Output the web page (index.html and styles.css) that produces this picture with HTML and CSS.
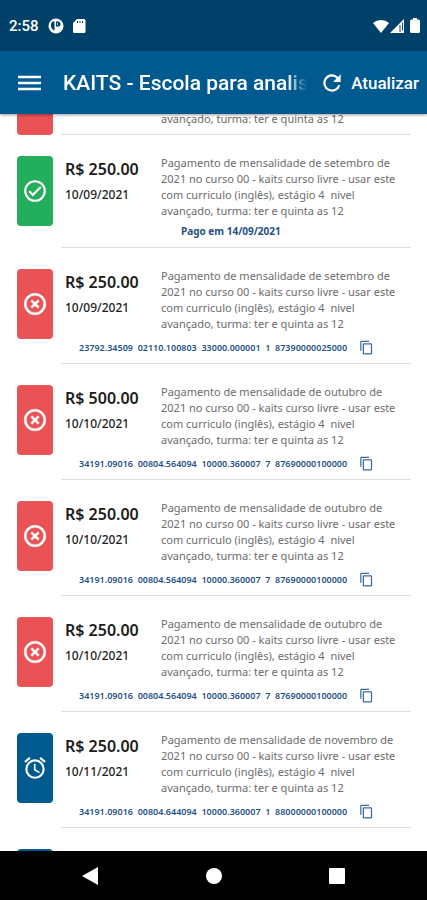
FILE: index.html
```html
<!DOCTYPE html>
<html lang="pt-BR">
<head>
<meta charset="utf-8">
<meta name="viewport" content="width=device-width, initial-scale=1">
<title>KAITS</title>
<link rel="stylesheet" href="styles.css">
</head>
<body>
<svg class="defs" aria-hidden="true">
  <symbol id="check" viewBox="0 0 24 24"><path d="M12 2a10 10 0 1 0 0 20 10 10 0 0 0 0-20zm0 18a8 8 0 1 1 0-16 8 8 0 0 1 0 16zm4.590-12.420L10 14.170l-2.590-2.580L6 13l4 4 8-8z"/></symbol>
  <symbol id="cross" viewBox="0 0 24 24"><path d="M14.590 8L12 10.590 9.410 8 8 9.410 10.590 12 8 14.590 9.410 16 12 13.410 14.590 16 16 14.590 13.410 12 16 9.410 14.590 8zM12 2a10 10 0 1 0 0 20 10 10 0 0 0 0-20zm0 18a8 8 0 1 1 0-16 8 8 0 0 1 0 16z" stroke="#fff" stroke-width=".4"/></symbol>
  <symbol id="alarm" viewBox="0 0 24 24"><path d="M22 5.720l-4.600-3.860-1.290 1.530 4.600 3.860L22 5.720zM7.880 3.390L6.600 1.860 2 5.710l1.290 1.530 4.590-3.850zM12.500 8H11v6l4.750 2.850.75-1.230-4-2.370V8zM12 4a9 9 0 1 0 0 18 9 9 0 0 0 0-18zm0 16a7 7 0 1 1 0-14 7 7 0 0 1 0 14z"/></symbol>
  <symbol id="copy" viewBox="0 0 24 24"><path d="M16 1H4c-1.100 0-2 .9-2 2v14h2V3h12V1zm3 4H8c-1.100 0-2 .9-2 2v14c0 1.100.9 2 2 2h11c1.100 0 2-.9 2-2V7c0-1.100-.9-2-2-2zm0 16H8V7h11v14z"/></symbol>
</svg>

<div class="status">
  <span class="clock">2:58</span>
  <svg class="status-icon" viewBox="0 0 16 16"><circle cx="8" cy="8" r="7.500" fill="#fff"/><path d="M4.500 3.500h2v9A5.500 5.500 0 0 1 4.500 3.500zM8 3.500h2a2.500 2.500 0 0 1 0 5H8z" fill="#004169"/><path d="M9 5.200h1v1.500H9z" fill="#fff"/></svg>
  <svg class="status-icon sd" viewBox="0 0 16 16"><path d="M6 1h7a1.500 1.500 0 0 1 1.500 1.500v11A1.500 1.500 0 0 1 13 15H3.500A1.500 1.500 0 0 1 2 13.500V5z" fill="#fff"/><path d="M6.500 3v2M9 3v2M11.500 3v2" stroke="#004169"/></svg>
  <span class="spacer"></span>
  <svg class="wifi" viewBox="0 0 16 14"><path d="M8 14L0 4a12 12 0 0 1 16 0z" fill="#fff"/></svg>
  <svg class="signal" viewBox="0 0 14 14"><path d="M14 0v14H0z" fill="#fff"/><path d="M10 6v7M12.500 3.500v8" stroke="#004169" stroke-width="1"/></svg>
  <svg class="battery" viewBox="0 0 10 15"><path d="M3 0h4v1.500h1.500A1.500 1.500 0 0 1 10 3v10.500A1.500 1.500 0 0 1 8.500 15h-7A1.500 1.500 0 0 1 0 13.500V3a1.500 1.500 0 0 1 1.500-1.500H3z" fill="#fff"/></svg>
</div>

<header class="appbar">
  <button class="menu" aria-label="Menu"><svg viewBox="0 0 24 16"><path d="M0 2h23M0 8h23M0 14h23" stroke="#fff" stroke-width="2.500"/></svg></button>
  <h1>KAITS - Escola para analis</h1>
  <button class="refresh"><svg viewBox="0 0 24 24"><path d="M17.650 6.350A8 8 0 1 0 19.730 14h-2.080A6 6 0 1 1 12 6c1.660 0 3.140.69 4.220 1.780L13 11h7V4l-2.350 2.350z" fill="#fff"/></svg>Atualizar</button>
</header>

<main>
  <ul class="list">
    <li class="item">
      <span class="badge overdue"></span>
      <div class="content">
        <p>avançado, turma: ter e quinta as 12</p>
      </div>
    </li>
    <li class="item">
      <span class="badge paid"><svg><use href="#check"/></svg></span>
      <div class="content">
        <div class="sum"><strong>R$ 250.00</strong><time>10/09/2021</time></div>
        <p>Pagamento de mensalidade de setembro de<br>2021 no curso 00 - kaits curso livre - usar este<br>com curriculo (inglês), estágio 4&nbsp; nivel<br>avançado, turma: ter e quinta as 12</p>
        <div class="paid-on">Pago em 14/09/2021</div>
      </div>
    </li>
    <li class="item">
      <span class="badge overdue"><svg><use href="#cross"/></svg></span>
      <div class="content">
        <div class="sum"><strong>R$ 250.00</strong><time>10/09/2021</time></div>
        <p>Pagamento de mensalidade de setembro de<br>2021 no curso 00 - kaits curso livre - usar este<br>com curriculo (inglês), estágio 4&nbsp; nivel<br>avançado, turma: ter e quinta as 12</p>
        <div class="code"><span>23792.34509&nbsp; 02110.100803&nbsp; 33000.000001&nbsp; 1&nbsp; 87390000025000</span><button aria-label="Copiar"><svg><use href="#copy"/></svg></button></div>
      </div>
    </li>
    <li class="item">
      <span class="badge overdue"><svg><use href="#cross"/></svg></span>
      <div class="content">
        <div class="sum"><strong>R$ 500.00</strong><time>10/10/2021</time></div>
        <p>Pagamento de mensalidade de outubro de<br>2021 no curso 00 - kaits curso livre - usar este<br>com curriculo (inglês), estágio 4&nbsp; nivel<br>avançado, turma: ter e quinta as 12</p>
        <div class="code"><span>34191.09016&nbsp; 00804.564094&nbsp; 10000.360007&nbsp; 7&nbsp; 87690000100000</span><button aria-label="Copiar"><svg><use href="#copy"/></svg></button></div>
      </div>
    </li>
    <li class="item">
      <span class="badge overdue"><svg><use href="#cross"/></svg></span>
      <div class="content">
        <div class="sum"><strong>R$ 250.00</strong><time>10/10/2021</time></div>
        <p>Pagamento de mensalidade de outubro de<br>2021 no curso 00 - kaits curso livre - usar este<br>com curriculo (inglês), estágio 4&nbsp; nivel<br>avançado, turma: ter e quinta as 12</p>
        <div class="code"><span>34191.09016&nbsp; 00804.564094&nbsp; 10000.360007&nbsp; 7&nbsp; 87690000100000</span><button aria-label="Copiar"><svg><use href="#copy"/></svg></button></div>
      </div>
    </li>
    <li class="item">
      <span class="badge overdue"><svg><use href="#cross"/></svg></span>
      <div class="content">
        <div class="sum"><strong>R$ 250.00</strong><time>10/10/2021</time></div>
        <p>Pagamento de mensalidade de outubro de<br>2021 no curso 00 - kaits curso livre - usar este<br>com curriculo (inglês), estágio 4&nbsp; nivel<br>avançado, turma: ter e quinta as 12</p>
        <div class="code"><span>34191.09016&nbsp; 00804.564094&nbsp; 10000.360007&nbsp; 7&nbsp; 87690000100000</span><button aria-label="Copiar"><svg><use href="#copy"/></svg></button></div>
      </div>
    </li>
    <li class="item">
      <span class="badge upcoming"><svg><use href="#alarm"/></svg></span>
      <div class="content">
        <div class="sum"><strong>R$ 250.00</strong><time>10/11/2021</time></div>
        <p>Pagamento de mensalidade de novembro de<br>2021 no curso 00 - kaits curso livre - usar este<br>com curriculo (inglês), estágio 4&nbsp; nivel<br>avançado, turma: ter e quinta as 12</p>
        <div class="code"><span>34191.09016&nbsp; 00804.644094&nbsp; 10000.360007&nbsp; 1&nbsp; 88000000100000</span><button aria-label="Copiar"><svg><use href="#copy"/></svg></button></div>
      </div>
    </li>
    <li class="item">
      <span class="badge upcoming"></span>
    </li>
  </ul>
</main>

<nav class="navbar">
  <button aria-label="Voltar"><svg viewBox="0 0 18 18"><path d="M16 0v18L0 9z" fill="#fff"/></svg></button>
  <button aria-label="Início"><svg viewBox="0 0 18 18"><circle cx="9" cy="9" r="8" fill="#fff"/></svg></button>
  <button aria-label="Recentes"><svg viewBox="0 0 18 18"><rect x="1" y="1" width="16" height="16" rx="1" fill="#fff"/></svg></button>
</nav>
</body>
</html>
```
FILE: styles.css
```css
* { box-sizing: border-box; }
body {
  margin: 0;
  height: 100vh;
  display: flex;
  flex-direction: column;
  overflow: hidden;
  background: #fff;
  font-family: "Noto Sans", sans-serif;
}
button {
  display: flex;
  align-items: center;
  padding: 0;
  border: 0;
  background: none;
  color: inherit;
  font: inherit;
}
.defs { display: none; }
.status, .appbar {
  display: flex;
  align-items: center;
  flex: none;
  color: #fff;
  font-family: Roboto, sans-serif;
  font-weight: 500;
}
.status {
  height: 51px;
  padding: 0 7px 0 9px;
  background: #004169;
  font-size: 15px;
}
.status-icon { width: 16px; height: 16px; margin-left: 9px; }
.sd { margin-left: 7px; }
.spacer { flex: 1; }
.wifi { width: 16px; height: 14px; }
.signal { width: 14px; height: 14px; margin: 0 6px 0 1px; }
.battery { width: 10px; height: 15px; }
.appbar {
  position: relative;
  height: 63px;
  padding: 0 8px 0 18px;
  background: #005a8f;
  box-shadow: 0 1px 3px rgba(0, 0, 0, 0.4);
}
.menu { margin-right: 21px; }
.menu svg { width: 24px; height: 16px; }
h1 {
  flex: 1;
  min-width: 0;
  margin: 0;
  overflow: hidden;
  white-space: nowrap;
  font-size: 21px;
  font-weight: 500;
  mask-image: linear-gradient(to left, transparent, #000 20px);
}
.refresh { gap: 6px; margin-left: 12px; font-size: 17px; }
.refresh svg { width: 26px; height: 26px; }
main { flex: 1; min-height: 0; overflow: hidden; }
.list { margin: -70px 0 0; padding: 0; list-style: none; }
.item {
  display: flex;
  gap: 8px;
  padding: 0 16px 0 17px;
}
.badge {
  display: flex;
  align-items: center;
  justify-content: center;
  flex: none;
  width: 36px;
  height: 70px;
  margin-top: 21px;
  border-radius: 4px;
  fill: #fff;
}
.badge svg { width: 26px; height: 26px; }
.overdue { background: #ea5355; }
.paid { background: #23ae5c; }
.upcoming { background: #005a8f; }
.content {
  flex: 1;
  display: grid;
  grid-template-columns: 96px 1fr;
  align-content: start;
  padding: 20px 0 0 4px;
  border-bottom: 1px solid #ddd;
}
.item:first-child .content { align-content: end; padding-bottom: 7px; }
.sum { display: flex; flex-direction: column; gap: 2px; padding-top: 2px; color: #1c1c1c; }
.sum strong { font-size: 16px; line-height: 24px; font-weight: 600; }
.sum time { font-size: 12px; line-height: 24px; font-weight: 500; }
p {
  grid-column: 2;
  margin: 0;
  white-space: nowrap;
  color: #6c6c6c;
  font-size: 11px;
  line-height: 16px;
  font-weight: 400;
}
.paid-on, .code { grid-column: 1 / -1; color: #1f5285; }
.paid-on {
  height: 28px;
  padding-left: 116px;
  font-size: 10px;
  line-height: 24px;
  font-weight: 700;
}
.code {
  display: flex;
  align-items: center;
  justify-content: space-between;
  height: 31px;
  padding: 0 37px 0 14px;
  white-space: nowrap;
  font-size: 9px;
  font-weight: 600;
}
.code svg { width: 15px; height: 15px; fill: #3d6c9c; }
.navbar {
  display: flex;
  align-items: center;
  justify-content: center;
  gap: 105px;
  flex: none;
  height: 49px;
  background: #000;
}
.navbar svg { width: 18px; height: 18px; }
```
